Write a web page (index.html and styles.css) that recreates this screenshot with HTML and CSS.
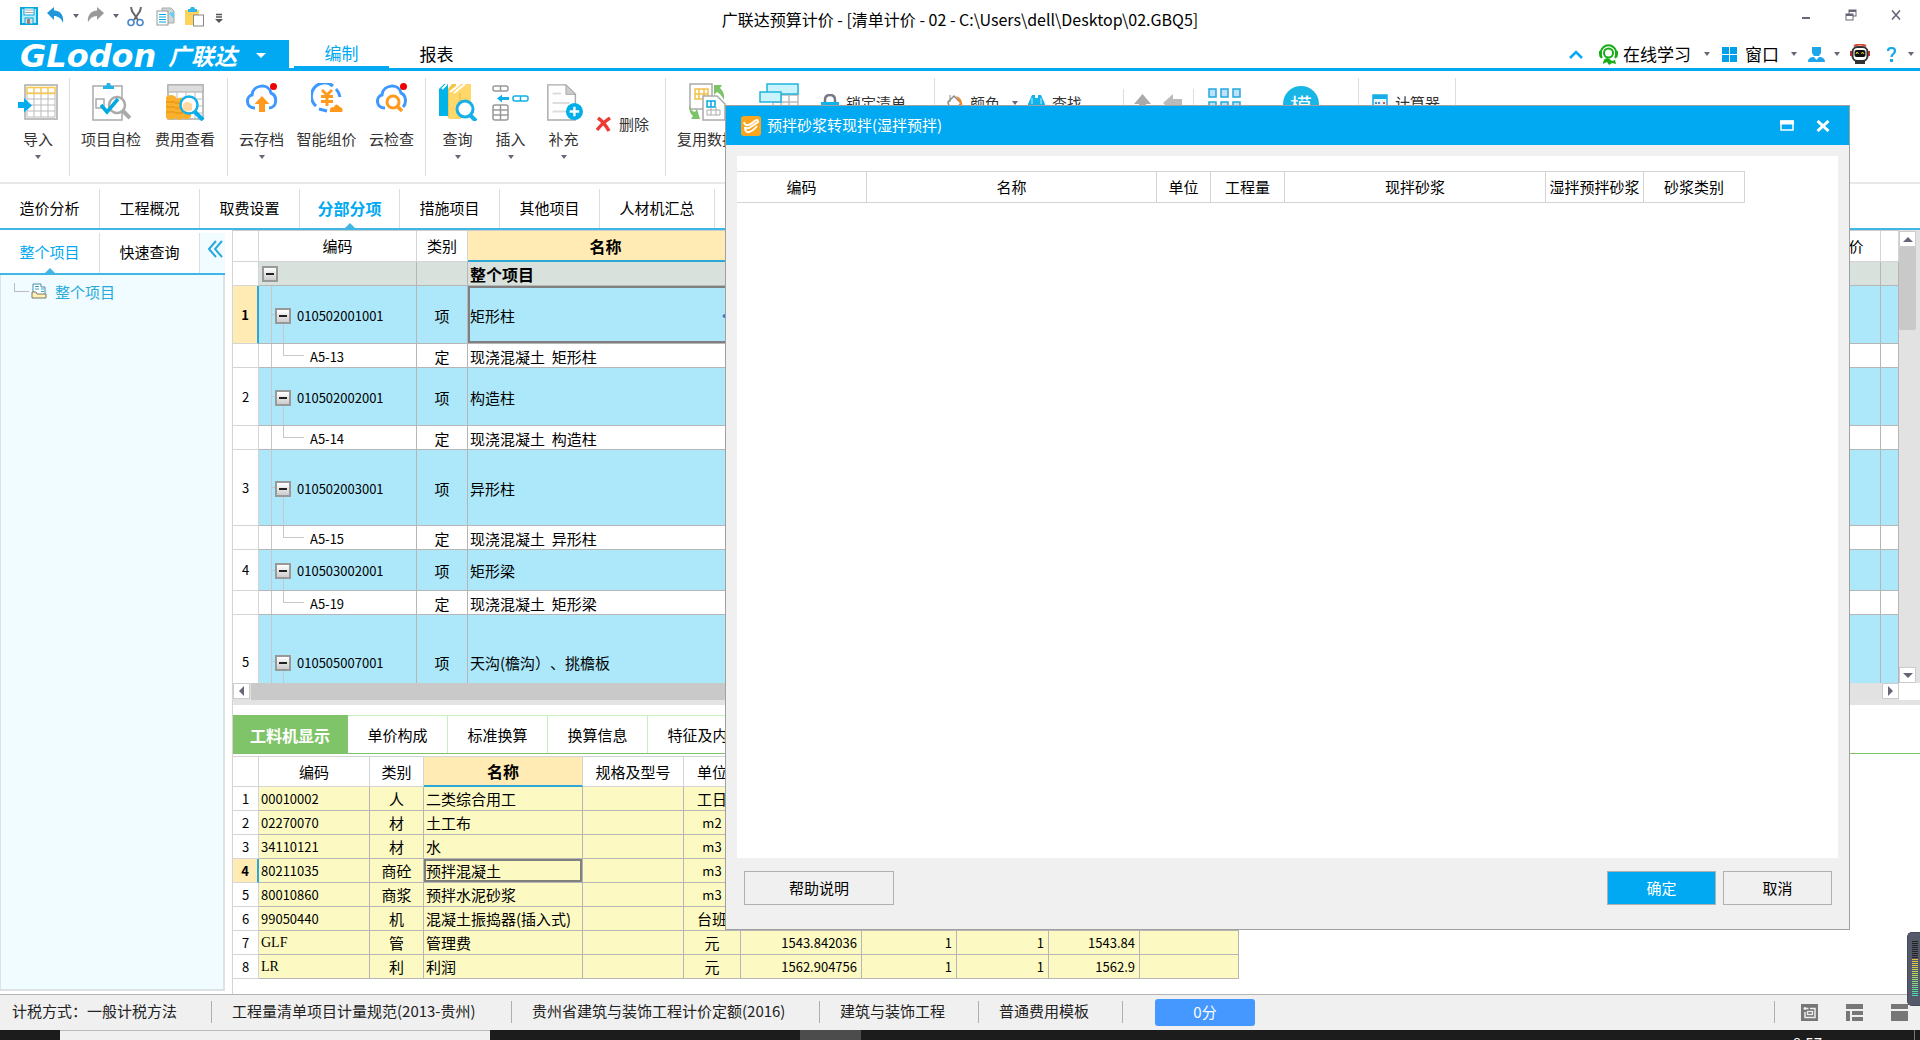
FILE: index.html
```html
<!DOCTYPE html>
<html lang="zh-CN">
<head>
<meta charset="utf-8">
<title>广联达预算计价</title>
<link rel="stylesheet" href="styles.css">
</head>
<body>
<header class="titlebar">
  <div class="quick">
    <button class="ib" aria-label="保存"><svg width="18" height="18" viewBox="0 0 18 18"><rect x="1" y="1" width="16" height="16" fill="#b9ecfb" stroke="#00a9e0" stroke-width="2"/><rect x="4" y="1" width="10" height="7" fill="#fff" stroke="#00a9e0"/><path d="M5 3h8M5 5.500h8" stroke="#aaa"/><rect x="5" y="11" width="8" height="6" fill="#ddd" stroke="#00a9e0"/><rect x="7" y="12" width="3" height="5" fill="#888"/></svg></button>
    <button class="ib undo" aria-label="撤销"><svg width="18" height="18" viewBox="0 0 18 18"><path d="M0 6L7 0v3.500C14 3.500 17 9 16 16C14 11 11 9 7 9v4z" fill="#2196d8"/></svg><i class="dn"></i></button>
    <button class="ib redo" aria-label="恢复"><svg width="18" height="18" viewBox="0 0 18 18"><path d="M17 6L10 0v3.500C4 3.500 0 9 1 15C3 11 6 9 10 9v4z" fill="#999"/></svg><i class="dn"></i></button>
    <button class="ib cut" aria-label="剪切"><svg width="18" height="20" viewBox="0 0 18 20"><path d="M4 0l1 4 6 9M14 0l-1 4-6 9" fill="none" stroke="#666" stroke-width="2"/><circle cx="4" cy="15.500" r="3" fill="#fff" stroke="#4a86c8" stroke-width="1.600"/><circle cx="13" cy="15.500" r="3" fill="#fff" stroke="#4a86c8" stroke-width="1.600"/></svg></button>
    <button class="ib copy" aria-label="复制"><svg width="19" height="19" viewBox="0 0 19 19"><path d="M6 1h9l3 3v12H6z" fill="#cfd6d8" stroke="#aaa"/><path d="M13 6l5 6V5z" fill="#5fd0ee"/><rect x="1" y="4" width="11" height="14" fill="#fff" stroke="#999"/><path d="M3 7.500h7M3 10h7M3 12.500h7M3 15h7" stroke="#00a9e0"/></svg></button>
    <button class="ib paste" aria-label="粘贴"><svg width="19" height="20" viewBox="0 0 19 20"><rect x="0" y="3" width="14" height="15" fill="#ffd25e"/><path d="M3 5V2h2l1-2h3l1 2h2v3z" fill="#2cb7e8"/><rect x="8.500" y="8" width="10" height="11" fill="#fff" stroke="#888"/></svg></button>
    <button class="ib more" aria-label="更多"><svg width="8" height="10" viewBox="0 0 8 10"><path d="M1 1.500h6M1 4h6" stroke="#555" stroke-width="1.500"/><path d="M0 6h8L4 10z" fill="#555"/></svg></button>
  </div>
  <h1 class="app-title">广联达预算计价 - [清单计价 - 02 - C:\Users\dell\Desktop\02.GBQ5]</h1>
  <div class="winbtns">
    <button class="ib" aria-label="最小化"><svg width="12" height="12" viewBox="0 0 12 12"><path d="M2 9h8" stroke="#667" stroke-width="2"/></svg></button>
    <button class="ib" aria-label="还原"><svg width="12" height="12" viewBox="0 0 12 12"><rect x="4" y="1" width="7" height="6" fill="none" stroke="#667"/><path d="M4 2h7" stroke="#667" stroke-width="2"/><rect x="1" y="5" width="7" height="6" fill="#fff" stroke="#667"/><path d="M1 6h7" stroke="#667" stroke-width="2"/></svg></button>
    <button class="ib" aria-label="关闭"><svg width="12" height="12" viewBox="0 0 12 12"><path d="M2 1.500l8 9M10 1.500l-8 9" stroke="#667" stroke-width="1.600"/></svg></button>
  </div>
</header>

<div class="menubar">
  <button class="brand"><span class="logo">GLodon</span><span class="logo-cn">广联达</span><i class="dn white"></i></button>
  <nav class="menus"><button class="menu on">编制</button><button class="menu">报表</button></nav>
  <div class="tools">
    <button class="ib t-up" aria-label="收起"><svg width="14" height="9" viewBox="0 0 14 9"><path d="M1 8l6-6 6 6" fill="none" stroke="#00a9f2" stroke-width="2.500"/></svg></button>
    <button class="tool t-learn"><svg width="21" height="21" viewBox="0 0 21 21"><path d="M4 14A8 8 0 1 1 17 14" fill="none" stroke="#17ad17" stroke-width="2"/><path d="M1 7h3v7H3Q1 13 1 10zM20 7h-3v7h1q2-1 2-4z" fill="#17ad17"/><circle cx="10.500" cy="9" r="4.500" fill="none" stroke="#17ad17" stroke-width="2"/><path d="M5 20q0-6 5-6l4 3 3-1 1 4-4-1-3 2-2-3z" fill="#17ad17"/></svg>在线学习<i class="dn"></i></button>
    <button class="tool t-win"><svg width="15" height="15" viewBox="0 0 15 15"><path d="M0 0h7v7H0zM8 0h7v7H8zM0 8h7v7H0zM8 8h7v7H8z" fill="#00a0ea"/></svg>窗口<i class="dn"></i></button>
    <button class="tool t-user" aria-label="用户"><svg width="17" height="15" viewBox="0 0 17 15"><path d="M4 0h9v6l-2 3H6L4 6zM0 15c0-4 3-5 6-5l2.500 3L11 10c3 0 6 1 6 5z" fill="#1ea5ea"/></svg><i class="dn"></i></button>
    <button class="ib t-bot" aria-label="助手"><svg width="20" height="20" viewBox="0 0 20 20"><path d="M4 2Q10-1 16 2" fill="none" stroke="#d9442f" stroke-width="2"/><rect x="2.500" y="3" width="15" height="14" rx="5" fill="#fff" stroke="#333" stroke-width="2"/><rect x="4.500" y="6" width="11" height="7" rx="2" fill="#111"/><path d="M6 10l1-2 1.500 2M11.500 10l1-2 1.500 2" stroke="#e4dc29" fill="none"/><path d="M5 18.500h10" stroke="#333" stroke-width="3"/><path d="M1 7v5M19 7v5" stroke="#a33" stroke-width="2"/></svg></button>
    <button class="tool t-help" aria-label="帮助"><svg width="11" height="15" viewBox="0 0 11 15"><path d="M2 4c0-4 7-4 7 0 0 3-3.500 3-3.500 6" fill="none" stroke="#18a8ea" stroke-width="2.200"/><rect x="4" y="12" width="3" height="3" fill="#18a8ea"/></svg><i class="dn"></i></button>
  </div>
</div>

<div class="ribbon">
  <div class="grp g1">
    <button class="big"><svg width="42" height="38" viewBox="0 0 42 38"><rect x="8" y="2" width="32" height="34" fill="#fff" stroke="#aaa" stroke-width="1.500"/><path d="M10 10h28M10 16h28M10 22h28M10 28h28M10 34h28M10 10v24M17 10v24M24 10v24M31 10v24M38 10v24" stroke="#bbb"/><path d="M10 4.500h28v6H10zM17 4v6M24 4v6M31 4v6" fill="none" stroke="#f8c84f" stroke-width="1.500"/><path d="M1 19h6v-4l8 7.500-8 7v-4.500H1z" fill="#00aef0"/></svg><span>导入</span><i class="dn"></i></button>
  </div>
  <div class="grp g2">
    <button class="big w74"><svg width="40" height="38" viewBox="0 0 40 38"><rect x="2" y="3" width="29" height="34" fill="#fff" stroke="#aaa" stroke-width="1.500"/><path d="M12 6V3h3l1-3h3l1 3h3v3z" fill="#20b4ea"/><rect x="5" y="16" width="8" height="9" fill="none" stroke="#aaa" stroke-width="1.500"/><circle cx="26" cy="22" r="8" fill="#fff" stroke="#aaa" stroke-width="2.500"/><path d="M10 22l6 7L27 16" fill="none" stroke="#00a9e0" stroke-width="3.500"/><path d="M32 28l7 7" stroke="#aaa" stroke-width="4"/></svg><span>项目自检</span></button>
    <button class="big w74"><svg width="40" height="38" viewBox="0 0 40 38"><rect x="3" y="2" width="35" height="34" fill="#fff" stroke="#aaa" stroke-width="1.500"/><rect x="3" y="2" width="35" height="7" fill="#ddd" stroke="#aaa"/><path d="M3 16h35M3 23h35M3 30h35M12 9v27M21 9v27M30 9v27" stroke="#bbb"/><path d="M1 14q5-4 10 0v2q5-3 7 0v6h8v12q-4 4-8 1-4 4-7 0-6 3-10 0z" fill="#fbb02c"/><path d="M1 19h9M1 24h9M1 29h9M10 20h8M10 25h8M10 30h8" stroke="#e08f10"/><circle cx="24" cy="22" r="8.500" fill="#fff" stroke="#16b0e8" stroke-width="2.500"/><path d="M18 21q4-4 9 0v6q-4 3-9 0z" fill="#ffd9a0"/><path d="M30 29l8 8" stroke="#00aef0" stroke-width="4"/></svg><span>费用查看</span></button>
  </div>
  <div class="grp g3">
    <button class="big w65"><svg width="32" height="38" viewBox="0 0 32 38"><path d="M9 25C-1 25 0 13 6 12 7 1 23 0 25 10c7 3 6 15-2 15" fill="none" stroke="#3d98ff" stroke-width="3"/><path d="M13 29V21H8.500L16 13l7.500 8H19v8z" fill="#ff9a1f"/><circle cx="27.500" cy="3.500" r="3.500" fill="#f00000"/></svg><span>云存档</span><i class="dn"></i></button>
    <button class="big w65"><svg width="32" height="38" viewBox="0 0 32 38"><path d="M5 23A13 13 0 0 1 22 3M25 6Q28 9 29 14M8 26l8 2" fill="none" stroke="#3d98ff" stroke-width="3"/><path d="M11 7l5 5 5-5M16 11v12M10 13.500h12M10 18.500h12" stroke="#ff9a1f" stroke-width="3" fill="none"/><path d="M19 29q-1-5 4-5 2-5 6 0 4 1 2 5z" fill="#ff9a1f"/></svg><span>智能组价</span></button>
    <button class="big w65"><svg width="32" height="38" viewBox="0 0 32 38"><path d="M9 25C-1 25 0 13 6 12 7 1 23 0 25 10c5 2 6 10 2 14" fill="none" stroke="#3d98ff" stroke-width="3"/><circle cx="17" cy="19" r="6" fill="#fff" stroke="#ff9a1f" stroke-width="3"/><path d="M21 23l5 5" stroke="#ff9a1f" stroke-width="3.500"/><circle cx="27.500" cy="3.500" r="3.500" fill="#f00000"/></svg><span>云检查</span></button>
  </div>
  <div class="grp g4">
    <button class="big w53"><svg width="40" height="38" viewBox="0 0 40 38"><path d="M1 6L6 1h4v32H1z" fill="#00b4ea"/><path d="M10 6l4-5h4v32l-8 2z" fill="#f5c64a"/><path d="M11 8L22 1h11v30l-12 5H11z" fill="#ffd76a"/><path d="M4 6l5-5M12 9L22 1M16 10L27 1" stroke="#fff" stroke-width="2"/><path d="M22 10v26" stroke="#e8b94a"/><circle cx="27" cy="26" r="8" fill="#fff" stroke="#16b0e8" stroke-width="3"/><path d="M32 32l6 6" stroke="#16b0e8" stroke-width="4"/></svg><span>查询</span><i class="dn"></i></button>
    <button class="big w53"><svg width="38" height="38" viewBox="0 0 38 38"><g fill="#fff" stroke="#999" stroke-width="1.500"><rect x="1" y="3" width="15" height="5" rx="2"/><path d="M8.500 3v5"/><rect x="1" y="22" width="15" height="15" rx="2"/><path d="M1 27h15M1 32h15M8.500 22v15"/></g><g stroke="#12b0e8" stroke-width="1.500" fill="#fff"><rect x="21" y="13" width="15" height="5" rx="2"/><path d="M28.500 13v5"/></g><path d="M5 15.500l5-4v2.500h7v3h-7v2.500z" fill="#12b0e8"/></svg><span>插入</span><i class="dn"></i></button>
    <button class="big w53"><svg width="40" height="40" viewBox="0 0 40 40"><path d="M3 2h19l10 10v27H3z" fill="#fff" stroke="#aaa" stroke-width="1.500"/><path d="M22 2v10h10z" fill="#ccc" stroke="#aaa"/><path d="M8 11h9M8 21h18M8 30h14" stroke="#ddd" stroke-width="2"/><circle cx="31" cy="30" r="9" fill="#00aeea"/><path d="M31 25v10M26 30h10" stroke="#fff" stroke-width="2.500"/></svg><span>补充</span><i class="dn"></i></button>
    <button class="small del"><svg width="15" height="15" viewBox="0 0 15 15"><path d="M2 1q6 4 11 13M14 1Q6 6 1 13" fill="none" stroke="#ee3b33" stroke-width="3.500"/></svg>删除</button>
  </div>
  <div class="grp g5">
    <button class="big w68"><svg width="38" height="38" viewBox="0 0 38 38"><rect x="2" y="1" width="22" height="25" fill="#fff" stroke="#aaa" stroke-width="1.500"/><path d="M7 6h13v10H7zM7 11h13M11 6v10M16 6v10" fill="none" stroke="#f5c04a" stroke-width="1.500"/><path d="M15 13h14l8 8v16H15z" fill="#fff" stroke="#aaa" stroke-width="1.500"/><path d="M19 18h8v6h-8zM23 18v6" fill="none" stroke="#00a9e0" stroke-width="1.500"/><path d="M19 27h13v5H19zM23 24v8M28 24v8" fill="none" stroke="#aaa"/><path d="M26 2h8l-2 3q5 4 4 12-3-6-7-8l-3 3z" fill="#7cc36a"/><path d="M2 21q0 7 5 8l2-3 3 10H3l2-3q-5-4-3-12z" fill="#7cc36a"/></svg><span>复用数据</span></button>
    <button class="big w76" aria-label="整理清单"><svg width="40" height="38" viewBox="0 0 40 38"><path d="M14 12h25v22H14zM14 19h25M14 26h25M22 12v22M30 12v22" fill="#fff" stroke="#bbb" stroke-width="1.500"/><rect x="8" y="1" width="31" height="10" fill="#c9f3fd" stroke="#20b4dc" stroke-width="1.500"/><rect x="1" y="9" width="21" height="10" fill="#c9f3fd" stroke="#20b4dc" stroke-width="1.500"/></svg></button>
    <button class="small up"><svg width="18" height="18" viewBox="0 0 18 18"><path d="M4 9V6q0-5 5-5t5 5v3" fill="none" stroke="#778" stroke-width="2.500"/><rect x="0" y="8" width="18" height="10" fill="#10b4ea"/></svg>锁定清单</button>
  </div>
  <div class="grp g6">
    <button class="small up"><svg width="17" height="18" viewBox="0 0 17 18"><path d="M2 8l6-6 7 7-6 8H4z" fill="#fff" stroke="#888" stroke-width="1.500"/><path d="M10 2q8 2 6 14l-4-2 2-5z" fill="#f08b26"/><path d="M4 1v7" stroke="#888"/></svg>颜色<i class="dn"></i></button>
    <button class="small up find"><svg width="19" height="18" viewBox="0 0 19 18"><path d="M1 10L5 1h3v3h3V1h3l4 9v8h-7v-6H8v6H1z" fill="#10b4ea"/><path d="M5 4v6M14 4v6" stroke="#bfefff"/></svg>查找</button>
  </div>
  <div class="grp g7 short">
    <button class="small up" aria-label="上移"><svg width="17" height="20" viewBox="0 0 17 20"><path d="M0 10L8.500 0 17 10h-5v10H5V10z" fill="#aaa"/></svg></button>
    <button class="small up" aria-label="左移"><svg width="20" height="18" viewBox="0 0 20 18"><path d="M0 9L10 0v5h9v8h-9v5z" fill="#bbb"/></svg></button>
  </div>
  <div class="grp g8">
    <button class="big tiles" aria-label="其他"><svg width="33" height="32" viewBox="0 0 33 32"><g fill="#bfe0f8" stroke="#20a9dc" stroke-width="1.500"><rect x="1" y="1" width="7" height="8"/><rect x="13" y="1" width="7" height="8"/><rect x="25" y="1" width="7" height="8"/><rect x="1" y="14" width="7" height="8"/><rect x="13" y="14" width="7" height="8"/><rect x="25" y="14" width="7" height="8"/></g></svg></button>
    <button class="round">模</button>
  </div>
  <div class="grp g9">
    <button class="small up"><svg width="16" height="18" viewBox="0 0 16 18"><rect x="1" y="1" width="14" height="16" fill="#e6f7fd" stroke="#16aee4" stroke-width="1.500"/><rect x="1" y="1" width="14" height="4" fill="#16aee4"/><path d="M3 9h6M3 12h6" stroke="#4a86c8" stroke-width="2" stroke-dasharray="2 1"/><path d="M11 9h2" stroke="#e44" stroke-width="2"/></svg>计算器</button>
  </div>
</div>

<nav class="pages">
  <button class="page">造价分析</button><button class="page">工程概况</button><button class="page">取费设置</button><button class="page on">分部分项</button><button class="page">措施项目</button><button class="page">其他项目</button><button class="page wide">人材机汇总</button>
</nav>

<main class="work">
  <aside class="side">
    <nav class="side-tabs"><button class="page on">整个项目</button><button class="page">快速查询</button><button class="fold" aria-label="折叠"><svg width="15" height="18" viewBox="0 0 15 18"><path d="M8 1L1 9l7 8M14 1L7 9l7 8" fill="none" stroke="#27a9dc" stroke-width="2"/></svg></button></nav>
    <div class="tree"><span class="branch"></span><svg width="16" height="16" viewBox="0 0 16 16"><path d="M2 1h8v3h4v9H2z" fill="#fff" stroke="#4a8ca8"/><path d="M4 3.500h4M4 6h4M10 6h3M10 8.500h3" stroke="#2fa5d0"/><path d="M1 9h4l1 2h9v4H1z" fill="#fff2b0" stroke="#777"/></svg><a href="#">整个项目</a></div>
  </aside>
  <section class="content">
    <div class="upper">
      <div class="sheet">
        <table class="bill">
          <colgroup><col class="c-no"><col class="c-code"><col class="c-kind"><col class="c-name"><col><col class="c-price"><col class="c-last"></colgroup>
          <thead><tr><th></th><th>编码</th><th>类别</th><th class="sel">名称</th><th></th><th>综合单价</th><th></th></tr></thead>
          <tbody>
            <tr class="root"><td class="no"></td><td class="code"><button class="pm" aria-label="折叠"></button></td><td></td><td class="name">整个项目</td><td></td><td></td><td></td></tr>
            <tr class="item h58 cur"><td class="no">1</td><td class="code"><div class="cell"><button class="pm" aria-label="折叠"></button>010502001001</div></td><td class="kind">项</td><td class="name picked"><div class="edit">矩形柱<span class="dots">···</span></div></td><td></td><td></td><td></td></tr>
            <tr class="sub"><td class="no"></td><td class="code">A5-13</td><td class="kind">定</td><td class="name">现浇混凝土&nbsp; 矩形柱</td><td></td><td></td><td></td></tr>
            <tr class="item h58"><td class="no">2</td><td class="code"><div class="cell"><button class="pm" aria-label="折叠"></button>010502002001</div></td><td class="kind">项</td><td class="name">构造柱</td><td></td><td></td><td></td></tr>
            <tr class="sub"><td class="no"></td><td class="code">A5-14</td><td class="kind">定</td><td class="name">现浇混凝土&nbsp; 构造柱</td><td></td><td></td><td></td></tr>
            <tr class="item h76"><td class="no">3</td><td class="code"><div class="cell"><button class="pm" aria-label="折叠"></button>010502003001</div></td><td class="kind">项</td><td class="name">异形柱</td><td></td><td></td><td></td></tr>
            <tr class="sub"><td class="no"></td><td class="code">A5-15</td><td class="kind">定</td><td class="name">现浇混凝土&nbsp; 异形柱</td><td></td><td></td><td></td></tr>
            <tr class="item h41"><td class="no">4</td><td class="code"><div class="cell"><button class="pm" aria-label="折叠"></button>010503002001</div></td><td class="kind">项</td><td class="name">矩形梁</td><td></td><td></td><td></td></tr>
            <tr class="sub"><td class="no"></td><td class="code">A5-19</td><td class="kind">定</td><td class="name">现浇混凝土&nbsp; 矩形梁</td><td></td><td></td><td></td></tr>
            <tr class="item h94"><td class="no">5</td><td class="code"><div class="cell"><button class="pm" aria-label="折叠"></button>010505007001</div></td><td class="kind">项</td><td class="name">天沟(檐沟）、挑檐板</td><td></td><td></td><td></td></tr>
          </tbody>
        </table>
      </div>
      <div class="vbar"><button class="sb" aria-label="向上"><i class="ar n"></i></button><span class="thumb"></span><button class="sb end" aria-label="向下"><i class="ar s"></i></button></div>
    </div>
    <div class="hbar"><div class="track"><button class="sb" aria-label="向左"><i class="ar w"></i></button><span class="thumb"></span><button class="sb end" aria-label="向右"><i class="ar e"></i></button></div><span class="corner"></span></div>
    <div class="split"></div>
    <div class="lower">
      <nav class="tabs"><button class="tab on">工料机显示</button><button class="tab">单价构成</button><button class="tab">标准换算</button><button class="tab">换算信息</button><button class="tab five">特征及内容</button></nav>
      <table class="res">
        <colgroup><col class="c-no"><col class="r-code"><col class="r-kind"><col class="r-name"><col class="r-spec"><col class="r-unit"><col class="r-loss"><col class="r-a"><col class="r-b"><col class="r-c"><col class="r-d"></colgroup>
        <thead><tr><th></th><th>编码</th><th>类别</th><th class="sel">名称</th><th>规格及型号</th><th>单位</th><th></th><th></th><th></th><th></th><th></th></tr></thead>
        <tbody>
          <tr><td class="no">1</td><td class="num">00010002</td><td class="kind">人</td><td>二类综合用工</td><td></td><td class="kind">工日</td><td></td><td></td><td></td><td></td><td></td></tr>
          <tr><td class="no">2</td><td class="num">02270070</td><td class="kind">材</td><td>土工布</td><td></td><td class="kind unit">m2</td><td></td><td></td><td></td><td></td><td></td></tr>
          <tr><td class="no">3</td><td class="num">34110121</td><td class="kind">材</td><td>水</td><td></td><td class="kind unit">m3</td><td></td><td></td><td></td><td></td><td></td></tr>
          <tr class="cur"><td class="no">4</td><td class="num">80211035</td><td class="kind">商砼</td><td class="picked">预拌混凝土</td><td></td><td class="kind unit">m3</td><td></td><td></td><td></td><td></td><td></td></tr>
          <tr><td class="no">5</td><td class="num">80010860</td><td class="kind">商浆</td><td>预拌水泥砂浆</td><td></td><td class="kind unit">m3</td><td></td><td></td><td></td><td></td><td></td></tr>
          <tr><td class="no">6</td><td class="num">99050440</td><td class="kind">机</td><td>混凝土振捣器(插入式)</td><td></td><td class="kind">台班</td><td></td><td></td><td></td><td></td><td></td></tr>
          <tr><td class="no">7</td><td class="let">GLF</td><td class="kind">管</td><td>管理费</td><td></td><td class="kind">元</td><td class="val">1543.842036</td><td class="val">1</td><td class="val">1</td><td class="val">1543.84</td><td></td></tr>
          <tr><td class="no">8</td><td class="let">LR</td><td class="kind">利</td><td>利润</td><td></td><td class="kind">元</td><td class="val">1562.904756</td><td class="val">1</td><td class="val">1</td><td class="val">1562.9</td><td></td></tr>
        </tbody>
      </table>
    </div>
  </section>
</main>

<footer class="status">
  <span class="st s1">计税方式：一般计税方法</span><span class="st s2">工程量清单项目计量规范(2013-贵州)</span><span class="st s3">贵州省建筑与装饰工程计价定额(2016)</span><span class="st s4">建筑与装饰工程</span><span class="st s5">普通费用模板</span>
  <button class="score">0分</button>
  <div class="views">
    <button class="ib" aria-label="视图一"><svg width="17" height="17" viewBox="0 0 17 17"><rect width="17" height="17" fill="#777"/><path d="M4 3v3M2.500 4.500h5M9 4.500h5v9H4V8" fill="none" stroke="#eee" stroke-width="1.500"/><rect x="6.500" y="7.500" width="5" height="3" fill="none" stroke="#eee" stroke-width="1.300"/></svg></button>
    <button class="ib" aria-label="视图二"><svg width="17" height="17" viewBox="0 0 17 17"><path d="M0 0h17v5H0zM0 7h4v10H0zM6 7h11v4H6zM6 13h11v4H6z" fill="#777"/></svg></button>
    <button class="ib" aria-label="视图三"><svg width="17" height="17" viewBox="0 0 17 17"><path d="M0 0h17v5H0zM0 7h17v10H0z" fill="#777"/></svg></button>
  </div>
</footer>
<div class="taskbar"><span class="search"></span><span class="running"></span><span class="clock">8:57</span><span class="peek"></span></div>

<div class="meter" aria-hidden="true"><span></span></div>

<section class="dialog" role="dialog" aria-labelledby="dlg-title">
  <header class="dlg-head">
    <svg width="20" height="20" viewBox="0 0 20 20"><rect width="20" height="20" rx="3" fill="#f9a51d"/><path d="M3 6q1 4 4 3 2 0 8-5M16 3l1 3-9 6q-4 1-4-1 0 6 4 5 4-1 8-6" fill="none" stroke="#fff" stroke-width="2"/></svg>
    <h2 id="dlg-title">预拌砂浆转现拌(湿拌预拌)</h2>
    <button class="ib" aria-label="最大化"><svg width="14" height="12" viewBox="0 0 14 12"><rect x="1" y="1" width="12" height="9" fill="none" stroke="#fff" stroke-width="1.500"/><path d="M0 2.500h14" stroke="#fff" stroke-width="4"/></svg></button>
    <button class="ib x" aria-label="关闭"><svg width="14" height="12" viewBox="0 0 14 12"><path d="M1.500 1l11 10M12.500 1l-11 10" stroke="#fff" stroke-width="3"/></svg></button>
  </header>
  <div class="dlg-body">
    <table class="mix">
      <colgroup><col class="m1"><col class="m2"><col class="m3"><col class="m4"><col class="m5"><col class="m6"><col class="m7"></colgroup>
      <thead><tr><th>编码</th><th>名称</th><th>单位</th><th>工程量</th><th>现拌砂浆</th><th>湿拌预拌砂浆</th><th>砂浆类别</th></tr></thead>
    </table>
  </div>
  <footer class="dlg-foot"><button class="btn help">帮助说明</button><button class="btn ok">确定</button><button class="btn">取消</button></footer>
</section>
</body>
</html>
```
FILE: styles.css
```css
* { box-sizing: border-box; }
body {
  margin: 0; height: 100vh; display: flex; flex-direction: column; overflow: hidden;
  background: #fff; color: #000; position: relative;
  font: 15px/20px "Noto Sans CJK SC", "Noto Sans", sans-serif;
  text-spacing-trim: space-all;
}
button { font: inherit; color: inherit; background: none; border: 0; padding: 0; margin: 0; white-space: nowrap; }
svg { display: block; flex: none; }
.ib { display: flex; align-items: center; }
.dn { width: 0; height: 0; border: 3px solid transparent; border-top: 4px solid #667; border-bottom: 0; flex: none; }

/* title bar */
.titlebar { height: 40px; flex: none; display: grid; grid-template-columns: 1fr auto 1fr; }
.quick { display: flex; align-items: flex-start; padding: 7px 0 0 20px; }
.undo, .redo { gap: 8px; }
.undo { margin-left: 9px; }
.redo { margin-left: 8px; }
.cut { margin-left: 8px; }
.copy { margin-left: 11px; }
.paste { margin-left: 10px; }
.more { margin: 6px 0 0 11px; }
.app-title { margin: 0; font-size: 16px; font-weight: 400; line-height: 38px; }
.winbtns { display: flex; justify-content: flex-end; gap: 33px; padding: 8px 18px 0 0; height: 22px; }

/* brand and menus */
.menubar { height: 31px; flex: none; display: flex; border-bottom: 3px solid #00a9f2; }
.brand { width: 289px; height: 31px; background: #00a9f2; color: #fff; display: flex; align-items: center; padding-left: 20px; }
.logo { font: italic 700 32px/30px "DejaVu Sans", sans-serif; width: 148px; text-align: left; }
.logo-cn { font-size: 23px; font-weight: 700; font-style: italic; line-height: 28px; padding-bottom: 2px; }
.dn.white { border-width: 5px; border-top: 5px solid #fff; border-bottom: 0; margin-left: 19px; }
.menus { display: flex; margin-left: 5px; }
.menu { width: 95px; height: 28px; font-size: 17px; line-height: 26px; }
.menu.on { color: #00a9f2; border-bottom: 2px solid #00a9f2; }
.tools { margin-left: auto; display: flex; align-items: center; padding-right: 6px; font-size: 17px; }
.tool { display: flex; align-items: center; }
.t-learn { margin-left: 15px; gap: 4px; }
.t-learn .dn, .t-win .dn { margin-left: 9px; }
.t-win { margin-left: 12px; gap: 8px; }
.t-win .dn { margin-left: 4px; }
.t-user { margin-left: 11px; gap: 9px; }
.t-bot { margin-left: 10px; }
.t-help { margin-left: 16px; gap: 11px; }

/* ribbon */
.ribbon { height: 113px; flex: none; display: flex; padding-top: 7px; border-bottom: 2px solid #e8e8e8; color: #333; }
.grp { height: 98px; border-right: 1px solid #ddd; display: flex; align-items: flex-start; padding-top: 5px; flex: none; }
.grp.short { height: 87px; margin-top: 11px; padding-top: 0; }
.big { display: flex; flex-direction: column; align-items: center; }
.big svg { height: 38px; }
.big span { margin-top: 8px; line-height: 20px; }
.big .dn { margin-top: 6px; }
.g1 { width: 70px; padding-left: 17px; }
.g2 { width: 158px; padding-left: 4px; }
.g3 { width: 198px; padding-left: 1px; }
.g4 { width: 240px; padding-left: 5px; }
.g5 { width: 269px; padding-left: 7px; }
.g6 { width: 188px; padding-left: 11px; border-right: 0; }
.g7 { width: 71px; padding: 0 10px; border-left: 1px solid #ddd; justify-content: space-between; }
.g8 { width: 165px; padding-left: 14px; gap: 42px; }
.g9 { width: 97px; padding-left: 13px; }
.w74 { width: 74px; } .w65 { width: 65px; } .w53 { width: 53px; } .w68 { width: 68px; } .w76 { width: 76px; }
.small { display: flex; align-items: center; gap: 7px; }
.small.del { margin: 31px 0 0 6px; gap: 8px; }
.small.up { margin-top: 10px; }
.g5 .up { margin-left: 4px; }
.g6 .dn { margin-left: 5px; }
.g7 .small.up { margin-top: 5px; }
.find { margin-left: 9px; }
.find { gap: 6px; }
.tiles { padding-top: 2px; }
.round { width: 36px; height: 36px; margin-top: 3px; border-radius: 50%; background: #18b6e6; color: #fff; font-size: 22px; line-height: 34px; }

/* page tabs */
.pages { height: 46px; flex: none; display: flex; padding-top: 5px; border-bottom: 2px solid #3fb6e4; }
.page { width: 100px; padding-bottom: 2px; border-right: 1px solid #ddd; position: relative; }
.page.wide { width: 115px; }
.page.on { color: #00a9f2; }
.pages .page.on { font-size: 16px; font-weight: 700; }
.page.on::after { content: ""; position: absolute; left: 50%; bottom: 0; margin-left: -5px; border: 5px solid transparent; border-top: 0; border-bottom-color: #3fb6e4; }

/* work area */
.work { flex: 1; min-height: 0; display: flex; }
.side { width: 225px; flex: none; display: flex; flex-direction: column; }
.side-tabs { height: 45px; flex: none; display: flex; padding-top: 3px; border-bottom: 2px solid #3fb6e4; }
.fold { width: 25px; padding: 0 0 8px 5px; background: #f0fcff; display: flex; align-items: center; justify-content: center; }
.tree { flex: 1; margin-bottom: 3px; background: #f0fcff; border: solid #dde2e4; border-width: 0 2px 2px 1px; display: flex; align-items: flex-start; padding: 8px 0 0 13px; }
.branch { width: 15px; height: 9px; border: solid #bbb; border-width: 0 0 1px 1px; margin-right: 2px; }
.tree a { color: #27aadb; text-decoration: none; margin-left: 8px; line-height: 18px; }
.content { flex: 1; min-width: 0; margin-left: 7px; border-left: 1px solid #d4d4d4; display: flex; flex-direction: column; }
.upper { flex: 1; min-height: 0; display: flex; }
.sheet { flex: 1; min-width: 0; overflow: hidden; }
table { border-collapse: separate; border-spacing: 0; table-layout: fixed; }
th { font-weight: 400; padding: 0; height: 31px; border: solid #d4d4d4; border-width: 0 1px 1px 0; }
th.sel { font-size: 16px; font-weight: 700; background: #ffebb3; border-bottom: 2px solid #2ea6d6; }
td { padding: 0 2px; height: 24px; line-height: 20px; border: solid #b6b6b6; border-width: 0 1px 1px 0; white-space: nowrap; }
.bill { width: 100%; border-top: 1px solid #ccc; }
.bill td { padding-top: 2px; }
.c-no { width: 26px; } .c-code { width: 158px; } .c-kind { width: 51px; } .c-name { width: 276px; } .c-price { width: 94px; } .c-last { width: 18px; }
td.no { padding: 0; text-align: center; font-size: 13px; border-color: #d4d4d4; background: #fff; }
.cur td.no { background: #ffebb3; border-right: 2px solid #2ea6d6; font-weight: 700; }
.kind { text-align: center; padding: 0; }
.root td { background: #d9e1dc; font-size: 16px; font-weight: 700; }
.root td.no { background: #fff; }
.bill .root td { padding-top: 0; }
.bill .root .code { padding-left: 3px; }
.item td { background-color: #ade8fa; }
.item td.no { background: #fff; }
.item.cur td.no { background: #ffebb3; }
.h58 td { height: 58px; } .h76 td { height: 76px; } .h41 td { height: 41px; } .h94 td { height: 94px; }
.pm { width: 16px; height: 16px; flex: none; display: block; border: 2px solid #999; background: linear-gradient(#222, #222) 2px 5px / 8px 2px no-repeat, linear-gradient(#fff, #ccc); }
.cell { display: flex; align-items: center; gap: 6px; }
.code { font-size: 13px; }
.item .code {
  padding-left: 16px;
  background-image: linear-gradient(#c4c8ca, #c4c8ca), linear-gradient(#c4c8ca, #c4c8ca), linear-gradient(#c4c8ca, #c4c8ca);
  background-position: 12px 0, 24px 100%, 12px 50%; background-size: 1px 100%, 1px 50%, 4px 1px; background-repeat: no-repeat;
}
.sub .code {
  padding-left: 51px;
  background-image: linear-gradient(#c4c8ca, #c4c8ca), linear-gradient(#c4c8ca, #c4c8ca), linear-gradient(#c4c8ca, #c4c8ca);
  background-position: 12px 0, 24px 0, 24px 50%; background-size: 1px 100%, 1px 50%, 21px 1px; background-repeat: no-repeat;
}
td.picked { box-shadow: inset 0 0 0 2px #808080; }
.edit { display: flex; justify-content: space-between; }
.dots { color: #2a7fd0; width: 24px; font-weight: 700; }
.vbar { width: 21px; flex: none; background: #e2e2e2; display: flex; flex-direction: column; padding: 1px 4px 0 0; }
.sb { width: 17px; height: 16px; flex: none; background: #fff; border: 1px solid #ccc; display: flex; align-items: center; justify-content: center; }
.vbar .thumb { height: 83px; background: #c9c9c9; border-radius: 2px; }
.vbar .end { margin-top: auto; }
.ar { border: 5px solid transparent; }
.ar.n { border-top: 0; border-bottom-color: #667; }
.ar.s { border-bottom: 0; border-top-color: #667; }
.ar.w { border-left: 0; border-right-color: #667; }
.ar.e { border-right: 0; border-left-color: #667; }
.hbar { height: 17px; flex: none; display: flex; }
.track { flex: 1; display: flex; background: #e2e2e2; }
.track .thumb { flex: 0 1 1200px; background: #c9c9c9; margin-left: 1px; }
.track .end { margin-left: auto; }
.corner { width: 21px; }
.split { height: 5px; flex: none; background: #e3e3e3; }

/* resource panel */
.lower { height: 289px; flex: none; padding-top: 10px; }
.tabs { height: 39px; display: flex; border-bottom: 1px solid #7cc36a; }
.tab { width: 100px; border: solid #c6efbd; border-width: 1px 1px 0 0; }
.tab.five { width: 115px; }
.tab.on { width: 115px; background: #7fc468; color: #fff; font-size: 16px; font-weight: 700; border-color: #7fc468; }
.res { width: 1006px; margin-top: 2px; border-top: 1px solid #d4d4d4; }
.res th { height: 30px; }
.r-code { width: 111px; } .r-kind { width: 54px; } .r-name { width: 159px; } .r-spec { width: 101px; } .r-unit { width: 57px; } .r-loss { width: 121px; } .r-a { width: 95px; } .r-b { width: 92px; } .r-c { width: 91px; } .r-d { width: 99px; }
.res td { background: #fcfac2; }
.res td.no { background: #fff; }
.res .cur td.no { background: #ffebb3; }
.res .kind { padding: 0; }
.num, .unit, .val { font-size: 13px; }
.let { font-family: "Liberation Serif", serif; font-size: 14px; }
.val { text-align: right; padding-right: 4px; }

/* status bar */
.status { height: 36px; flex: none; background: #f0f0f0; border-top: 1px solid #b4b4b4; display: flex; align-items: center; padding-bottom: 1px; color: #222; }
.st { height: 22px; line-height: 20px; border-right: 1px solid #a8b0b8; padding-left: 20px; white-space: nowrap; }
.s1 { width: 212px; padding-left: 12px; } .s2 { width: 300px; } .s3 { width: 308px; } .s4 { width: 159px; } .s5 { width: 144px; }
.score { width: 100px; height: 27px; margin-left: 32px; background: #4498ff; color: #fff; border-radius: 3px; }
.views { margin-left: auto; height: 22px; border-left: 1px solid #a8b0b8; display: flex; align-items: center; gap: 28px; padding: 0 12px 0 26px; }
.taskbar { height: 10px; flex: none; background: #1c1c1c; display: flex; overflow: hidden; color: #fff; }
.search { width: 430px; margin-left: 60px; background: #f0f0f0; border-top: 1px solid #bbb; }
.running { width: 61px; margin-left: 310px; background: #4c4c4c; }
.clock { margin: 3px 92px 0 auto; }
.peek { width: 6px; border-left: 1px solid #777; }
.meter { position: absolute; right: 0; bottom: 34px; width: 13px; height: 74px; background: #555a6a; border: 1px solid #444a58; border-right: 0; border-radius: 5px 0 0 5px; padding: 8px 2px 8px 4px; }
.meter span { display: block; height: 100%; background: repeating-linear-gradient(#555a6a00 0 1px, #555a6a 1px 2px), linear-gradient(#222 30%, #f0b840 30%, #b8d860 60%, #38d8b8); }

/* dialog */
.dialog { position: absolute; left: 725px; right: 70px; top: 105px; height: 825px; background: #f0f0f0; border: 1px solid #a0a0a0; display: flex; flex-direction: column; }
.dlg-head { height: 39px; flex: none; background: #00a9f2; color: #fff; display: flex; align-items: center; padding: 0 19px 0 15px; }
.dlg-head h2 { margin: 0 auto 0 6px; padding-bottom: 1px; font-size: 15px; font-weight: 400; }
.dlg-head .x { margin-left: 22px; }
.dlg-body { flex: 1; margin: 11px 11px 0; background: #fff; padding-top: 15px; }
.mix { width: 1008px; }
.mix th { border-top-width: 1px; height: 32px; }
.m1 { width: 130px; } .m2 { width: 290px; } .m3 { width: 54px; } .m4 { width: 74px; } .m5 { width: 261px; } .m6 { width: 98px; } .m7 { width: 101px; }
.dlg-foot { height: 71px; flex: none; display: flex; gap: 7px; padding: 13px 17px 0 18px; }
.btn { width: 109px; height: 34px; border: 1px solid #b0b0b0; }
.btn.help { width: 150px; margin-right: auto; }
.btn.ok { background: #00a9f2; color: #fff; }
```
